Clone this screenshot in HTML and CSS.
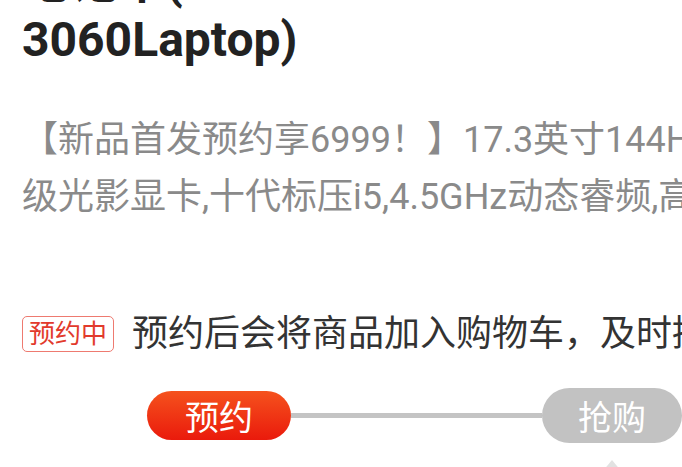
FILE: index.html
```html
<!DOCTYPE html>
<html lang="zh-CN">
<head>
<meta charset="utf-8">
<title>预约</title>
<link rel="stylesheet" href="styles.css">
</head>
<body>
<div class="page">
  <h1 class="title">笔记本(<br>3060Laptop)</h1>
  <p class="desc"><span class="line">【新品首发预约享6999！】17.3英寸144Hz电竞屏</span><span class="line">级光影显卡,十代标压i5,4.5GHz动态睿频,高速固态</span></p>
  <div class="notice">
    <span class="tag">预约中</span>
    <span class="notice-text">预约后会将商品加入购物车，及时提醒您抢购</span>
  </div>
  <div class="steps">
    <div class="step step-active">预约</div>
    <div class="track"></div>
    <div class="step step-next">抢购</div>
  </div>
  <div class="pointer"></div>
</div>
</body>
</html>
```
FILE: styles.css
```css
html, body {
  margin: 0;
  padding: 0;
  background: #ffffff;
  overflow: hidden;
  width: 682px;
  height: 467px;
}
.page {
  padding-left: 22px;
  font-family: Roboto, "Noto Sans CJK SC", sans-serif;
  white-space: nowrap;
}
.title {
  margin: -47px 0 0 0;
  font-size: 48px;
  line-height: 58px;
  font-weight: 700;
  color: #222222;
}
.desc {
  margin: 43px 0 0 0;
  font-size: 36px;
  line-height: 57px;
  color: #8a8a8a;
}
.desc .line {
  display: block;
}
.notice {
  margin-top: 90px;
  display: flex;
  align-items: center;
  height: 36px;
  gap: 18px;
}
.tag {
  flex: none;
  box-sizing: border-box;
  width: 92px;
  height: 36px;
  border: 1px solid #ee7a70;
  border-radius: 5px;
  color: #e23a2c;
  font-size: 26px;
  line-height: 34px;
  text-align: center;
}
.notice-text {
  flex: none;
  font-size: 36px;
  line-height: 36px;
  color: #333333;
}
.steps {
  margin-top: 36px;
  margin-left: 125px;
  display: flex;
  align-items: center;
  height: 55px;
}
.step {
  flex: none;
  display: flex;
  align-items: center;
  justify-content: center;
  color: #ffffff;
  font-size: 34px;
}
.step-active {
  width: 144px;
  height: 49px;
  border-radius: 25px;
  background: linear-gradient(180deg, #f5521d 0%, #ea1a0c 100%);
}
.step-next {
  width: 140px;
  height: 55px;
  border-radius: 28px;
  background: #c2c2c2;
}
.track {
  flex: none;
  width: 251px;
  height: 5px;
  background: #c4c4c4;
}
.pointer {
  margin-top: 17px;
  margin-left: 580px;
  width: 0;
  height: 0;
  border-left: 10px solid transparent;
  border-right: 10px solid transparent;
  border-bottom: 12px solid #e2e2e2;
}
```
